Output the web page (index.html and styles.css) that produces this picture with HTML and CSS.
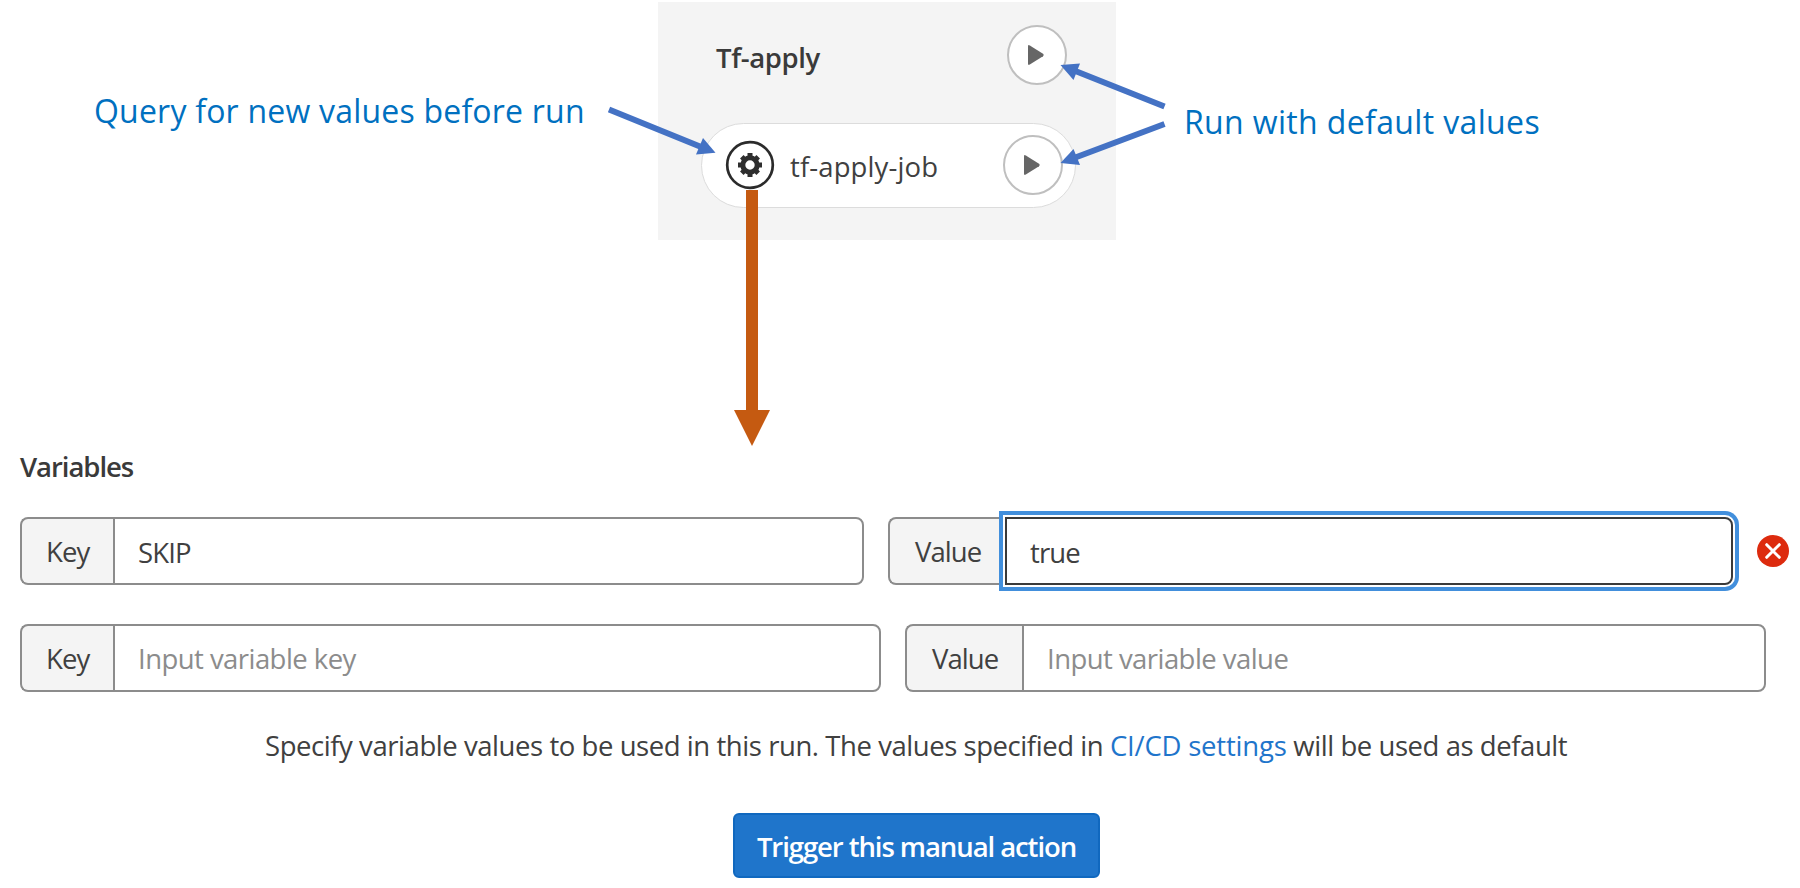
FILE: index.html
```html
<!DOCTYPE html>
<html lang="en">
<head>
<meta charset="utf-8">
<title>Run manual job</title>
<link rel="stylesheet" href="styles.css">
</head>
<body>
<section class="diagram">
  <p class="note note-query">Query for new values before run</p>
  <div class="stage">
    <div class="stage-head">
      <span class="stage-name">Tf-apply</span>
      <button class="play" aria-label="Run stage"><svg viewBox="0 0 18 22"><path d="M1 2.2Q1 .4 2.8 1.4L16 9.8Q17.6 11 16 12.2L2.8 20.6Q1 21.6 1 19.8Z"/></svg></button>
    </div>
    <div class="job">
      <svg class="gear" viewBox="0 0 50 50">
        <circle class="gear-ring" cx="25" cy="25" r="22.8"/>
        <g class="gear-body">
          <circle class="gear-wheel" cx="25" cy="25" r="7.2"/>
          <path class="gear-teeth" d="M25 13v4M25 33v4M13 25h4M33 25h4M16.8 16.8l2.6 2.6M30.6 30.6l2.6 2.6M16.8 33.2l2.6-2.6M30.6 19.4l2.6-2.6"/>
        </g>
      </svg>
      <span class="job-name">tf-apply-job</span>
      <button class="play" aria-label="Run job"><svg viewBox="0 0 18 22"><path d="M1 2.2Q1 .4 2.8 1.4L16 9.8Q17.6 11 16 12.2L2.8 20.6Q1 21.6 1 19.8Z"/></svg></button>
    </div>
  </div>
  <p class="note note-run">Run with default values</p>
  <svg class="arrows" viewBox="0 0 1800 450">
    <g class="blue">
      <path class="shaft" d="M609 109.5L700 146.5M1164.5 106.5L1076 71.2M1164.5 124L1076 157.3"/>
      <path d="M715.5 152.7L696 154.5L703 138Z"/>
      <path d="M1060.5 65L1080 63.5L1073.5 80Z"/>
      <path d="M1060.5 163L1073.5 149L1080 165Z"/>
    </g>
    <path class="orange" d="M746 190H758V410H770L752 446L734 410H746Z"/>
  </svg>
</section>

<form class="variables">
  <h2 class="title">Variables</h2>
  <div class="row">
    <div class="field field-key-short"><label class="tag">Key</label><div class="input typed">SKIP</div></div>
    <div class="field field-value-short"><label class="tag">Value</label><div class="input typed focused">true</div></div>
    <svg class="remove" viewBox="0 0 32 32"><circle cx="16" cy="16" r="16"/><path d="M9.7 9.7L22.3 22.3M22.3 9.7L9.7 22.3"/></svg>
  </div>
  <div class="row">
    <div class="field field-key"><label class="tag">Key</label><div class="input empty">Input variable key</div></div>
    <div class="field field-value"><label class="tag">Value</label><div class="input empty">Input variable value</div></div>
  </div>
  <p class="help">Specify variable values to be used in this run. The values specified in <a class="link">CI/CD settings</a> will be used as default</p>
  <button class="submit" type="button">Trigger this manual action</button>
</form>
</body>
</html>
```
FILE: styles.css
```css
* { box-sizing: border-box; }
body {
  margin: 0;
  width: 1800px;
  height: 888px;
  overflow: hidden;
  background: #fff;
  color: #404040;
  font: 27.5px/38px "Open Sans", "Noto Sans", sans-serif;
  letter-spacing: -0.41px;
}
p, h2 { margin: 0; }
button { font: inherit; letter-spacing: inherit; padding: 0; }

.diagram {
  position: relative;
  display: flex;
  align-items: flex-start;
  height: 448px;
  padding-top: 2px;
}
.note {
  color: #0070c0;
  font-size: 32px;
  line-height: 40px;
  white-space: nowrap;
}
.note-query { width: 658px; padding: 89px 0 0 94px; letter-spacing: 0.21px; }
.note-run { padding: 100px 0 0 68px; letter-spacing: 0.36px; }

.stage {
  width: 458px;
  height: 238px;
  padding: 23px 40px 0 43px;
  background: #f4f4f4;
}
.stage-head {
  display: flex;
  align-items: center;
  justify-content: space-between;
  height: 60px;
  margin-bottom: 38px;
  padding: 0 9px 0 15px;
}
.stage-name { color: #3a3a3a; font-weight: 600; letter-spacing: -0.4px; padding-top: 5px; }
.job {
  display: flex;
  align-items: center;
  height: 85px;
  padding: 0 12px 1px 23px;
  background: #fff;
  border: 1.5px solid #dcdcdc;
  border-radius: 43px;
}
.gear { width: 50px; height: 50px; margin-right: 15px; }
.gear-ring { fill: #fff; stroke: #2b2b2b; stroke-width: 2.7; }
.gear-wheel { fill: none; stroke: #2e2e2e; stroke-width: 5; }
.gear-teeth { fill: none; stroke: #2e2e2e; stroke-width: 5; }
.job-name { flex: 1; letter-spacing: 0.12px; padding-top: 4px; }
.play {
  display: flex;
  align-items: center;
  justify-content: center;
  width: 60px;
  height: 60px;
  background: #fff;
  border: 2px solid #bfbfbf;
  border-radius: 50%;
}
.play svg { width: 18px; height: 22px; fill: #666; margin-right: 2px; }

.arrows { position: absolute; left: 0; top: 0; width: 1800px; height: 450px; pointer-events: none; }
.blue { fill: #4472c4; }
.shaft { fill: none; stroke: #4472c4; stroke-width: 6; }
.orange { fill: #c55a11; }

.variables { padding: 0 0 0 20px; }
.title { color: #3a3a3a; font-size: 27.5px; font-weight: 600; line-height: 38px; letter-spacing: -1.05px; margin-bottom: 31px; }
.row { display: flex; align-items: center; height: 68px; margin-bottom: 39px; }
.row + .row { margin-bottom: 35px; }
.field { display: flex; flex-shrink: 0; height: 68px; }
.field-key-short { width: 844px; margin-right: 24px; }
.field-value-short { width: 845px; margin-right: 24px; }
.field-key { width: 861px; margin-right: 24px; }
.field-value { width: 861px; }
.tag {
  display: flex;
  align-items: center;
  padding: 1px 24px 0 24px;
  background: #f4f4f4;
  border: 2px solid #8c8c8c;
  border-right: 0;
  border-radius: 8px 0 0 8px;
  letter-spacing: -0.95px;
}
.field-key .tag, .field-key-short .tag { width: 93px; }
.field-value .tag, .field-value-short .tag { width: 117px; padding-left: 25px; }
.input {
  flex: 1;
  display: flex;
  align-items: center;
  padding-left: 23px;
  border: 2px solid #8c8c8c;
  border-radius: 0 8px 8px 0;
  background: #fff;
}
.typed { padding-top: 4px; letter-spacing: -0.85px; }
.empty { padding-top: 1px; color: #8c8c8c; letter-spacing: -0.55px; }
.focused { border-color: #3a3a3a; box-shadow: 0 0 0 2px #fff, 0 0 0 6px #428fdc; z-index: 1; }
.remove { flex-shrink: 0; width: 32px; height: 32px; }
.remove circle { fill: #dd2b0e; }
.remove path { fill: none; stroke: #fff; stroke-width: 3; stroke-linecap: round; }

.help { padding-left: 245px; letter-spacing: -0.44px; white-space: nowrap; }
.link { color: #1f75cb; letter-spacing: -0.2px; }
.submit {
  display: block;
  width: 367px;
  height: 65px;
  margin: 48px 0 0 713px;
  padding-top: 3px;
  color: #fff;
  background: #1f75cb;
  border: 2px solid #1068bf;
  border-radius: 6px;
  font-weight: 600;
  letter-spacing: -1.08px;
  white-space: nowrap;
}
```
